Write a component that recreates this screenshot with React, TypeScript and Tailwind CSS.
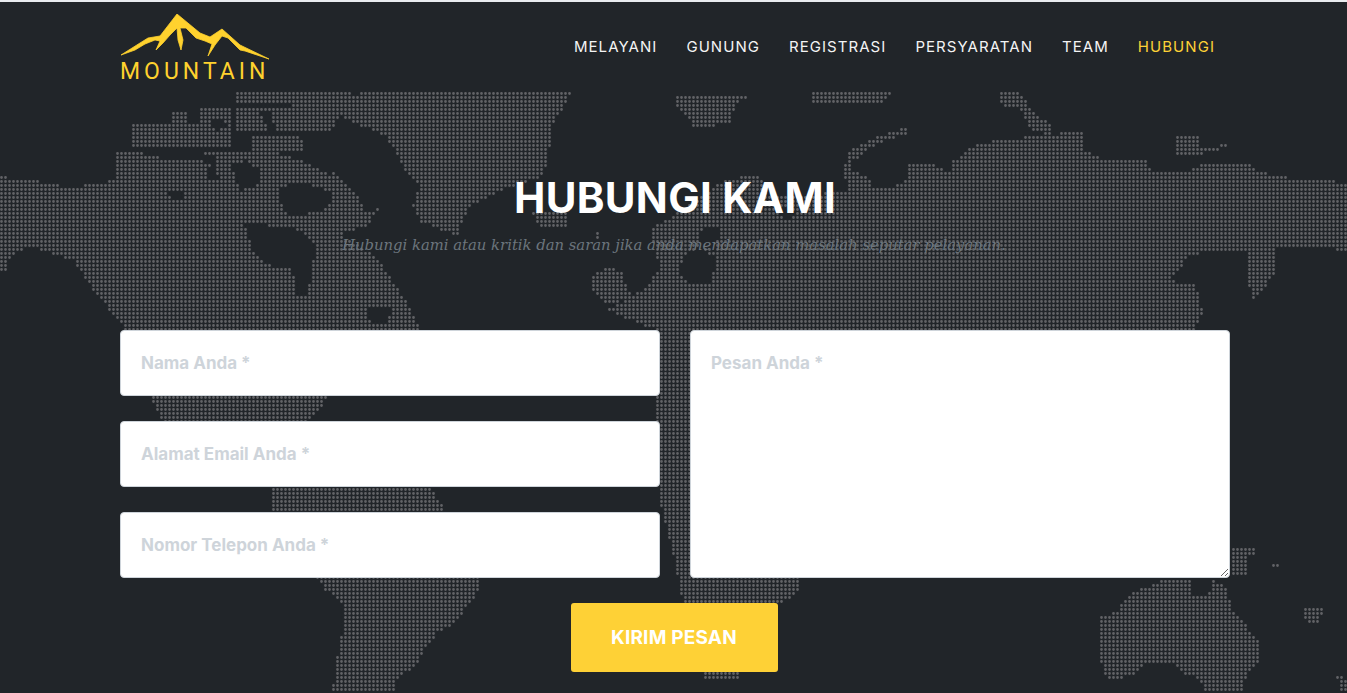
import { useMemo } from "react";

const navItems = ["MELAYANI", "GUNUNG", "REGISTRASI", "PERSYARATAN", "TEAM"];

const land = [
  // north america
  "0,177 35,180 60,186 72,190 85,185 117,180 117,150 200,150 270,150 300,160 333,170 353,190 367,213 380,207 367,225 340,235 377,257 397,287 407,303 417,320 420,332 410,370 330,396 305,425 165,425 150,396 120,320 107,307 93,290 73,260 30,247 10,255 8,270 0,272",
  // arctic islands
  "130,123 145,122 160,125 200,125 200,147 130,147",
  "170,112 187,112 187,127 170,127",
  "200,108 233,108 233,147 200,147",
  "237,107 317,107 317,133 237,133",
  "250,135 307,135 307,150 250,150",
  "237,92 353,92 345,110 330,133 300,133 290,105 237,102",
  // greenland
  "360,92 572,92 553,125 548,160 540,178 500,190 470,207 457,235 420,222 412,205 420,187 403,167 387,137 333,113",
  // iceland, svalbard, small islands
  "533,213 567,213 567,227 540,227",
  "675,97 690,95 747,97 735,105 730,122 695,130 687,115 675,108",
  "813,92 893,92 885,102 813,102",
  "1000,92 1020,92 1032,112 1053,125 1050,135 1030,130 1020,108 1000,105",
  "1177,137 1200,137 1200,147 1227,145 1227,147 1200,155 1177,155",
  "597,231 599,231 599,238 597,238",
  // uk
  "592,275 605,268 620,270 633,300 605,303 590,290",
  // europe and asia
  "607,310 647,287 660,267 650,230 677,213 720,183 747,175 762,178 768,195 843,193 870,193 870,186 895,186 905,182 907,165 925,162 950,172 952,162 975,145 1000,140 1050,135 1085,130 1083,150 1100,158 1135,158 1145,160 1150,170 1185,172 1200,165 1250,165 1260,172 1290,178 1330,180 1347,185 1347,250 1307,248 1277,246 1277,272 1262,290 1253,300 1247,280 1247,250 1220,250 1190,255 1170,280 1195,285 1203,312 1195,330 1000,340 800,420 800,578 678,578 662,505 656,420 656,330",
  // scandinavia
  "843,170 850,150 880,135 907,128 907,135 880,142 860,155 857,172 870,180 875,193 850,193",
  // south america
  "270,487 430,487 478,560 478,590 475,600 465,608 460,620 438,632 425,650 415,668 400,675 397,680 395,692 330,692 337,672 337,660 342,635 345,605 325,590 316,578 270,512",
  // africa under the button
  "660,500 678,575 682,600 704,678 738,678 770,610 800,592 800,575",
  // australia
  "1100,618 1118,610 1132,592 1145,588 1165,578 1190,578 1190,598 1212,592 1212,578 1228,590 1232,610 1242,618 1248,628 1260,640 1260,660 1247,675 1243,690 1205,690 1200,678 1185,675 1175,665 1145,665 1135,675 1112,680 1102,670 1100,650",
  // papua, pacific
  "1232,548 1255,548 1255,556 1248,556 1248,575 1232,575",
  "1272,562 1280,562 1280,566 1272,566",
  "1300,610 1325,606 1318,622 1308,622",
  "1337,675 1347,680 1347,690 1340,690",
];

const seas = [
  "245,225 265,225 300,230 315,245 312,275 305,297 295,295 293,270 270,265 255,255",
  "277,190 292,183 312,185 333,192 328,208 312,212 296,216 285,212",
  "133,147 170,148 215,155 215,162 170,160 135,152",
  "205,167 215,165 218,178 208,181",
  "232,165 246,160 262,172 256,186 240,191",
  "163,194 178,192 190,196 176,200",
  "207,123 220,120 230,125 218,130",
  "260,110 268,110 277,130 268,130",
  "237,133 295,133 295,137 237,137",
  "300,133 320,133 333,177 310,165",
  "366,309 393,307 385,323 370,322",
  "683,255 700,248 717,258 710,283 690,285 680,272",
  "700,230 720,228 715,250 700,247",
  "775,209 790,206 797,214 785,221",
  "850,160 860,157 857,172 850,172",
];

function parse(points: string) {
  return points.split(" ").map(p => p.split(",").map(Number));
}

function inside(x: number, y: number, poly: number[][]) {
  let hit = false;
  for (let i = 0, j = poly.length - 1; i < poly.length; j = i++) {
    const [xi, yi] = poly[i];
    const [xj, yj] = poly[j];
    if (yi > y !== yj > y && x < ((xj - xi) * (y - yi)) / (yj - yi) + xi) hit = !hit;
  }
  return hit;
}

function WorldMap() {
  // the map is a grid of dots, kept where a cell falls on land and not on a sea
  const d = useMemo(() => {
    const landPolys = land.map(parse);
    const seaPolys = seas.map(parse);
    let out = "";
    for (let y = 92; y < 693; y += 4) {
      for (let x = 0; x < 1347; x += 4) {
        const cx = x + 1.5;
        const cy = y + 1.5;
        if (landPolys.some(p => inside(cx, cy, p)) && !seaPolys.some(p => inside(cx, cy, p))) {
          out += `M${cx} ${cy}h.01`;
        }
      }
    }
    return out;
  }, []);

  return (
    <svg className="absolute top-0 left-0 w-[1347px] h-[693px]" viewBox="0 0 1347 693" aria-hidden="true">
      <path d={d} stroke="#626366" strokeWidth="2.8" strokeLinecap="round" fill="none" />
    </svg>
  );
}

function Logo() {
  return (
    <div className="flex flex-col w-[150px] h-[68px]">
      <svg className="w-[150px] h-[46px] shrink-0" viewBox="120 14 150 46">
        <path
          fill="#ffd22e"
          stroke="#ffd22e"
          strokeWidth="0.8"
          strokeLinejoin="round"
          d="M121 55 L140 43 L148 38 L160 36 L177 14 L200 33 L210 37 L222 29 L240 45 L269 59 L245 51 L240 50 L228 38 L222 36 L215 45 L208 56 L212 44 L205 41 L196 38 L186 28 L180 28 L183 40 L181 50 L178 40 L177 28 L170 35 L163 43 L156 50 L160 41 L155 40 L145 44 L135 50 Z"
        />
      </svg>
      <span className="mt-[1px] font-['Roboto',sans-serif] text-[23px] leading-[22px] tracking-[4px] text-[#ffd22e] whitespace-nowrap">
        MOUNTAIN
      </span>
    </div>
  );
}

const fieldClass =
  "h-[66px] w-full px-[20px] bg-white rounded-[4px] border border-[#ced4da] text-[17px] font-bold placeholder:text-[#ced4da]";

export default function App() {
  return (
    <div className="relative h-[693px] overflow-hidden bg-[#212529] font-['Inter',sans-serif]">
      <WorldMap />
      <div className="relative h-[2px] bg-[#e9ecef]" />
      <div className="relative w-[1110px] ml-[120px]">
        <nav className="flex items-center justify-between pt-[12px] pr-[15px] h-[80px]">
          <Logo />
          <ul className="flex gap-[29px] text-[15px] tracking-[1.05px] text-[#f4f4f4] -mt-[2px]">
            {navItems.map(item => (
              <li key={item}>{item}</li>
            ))}
            <li className="text-[#fed136]">HUBUNGI</li>
          </ul>
        </nav>
        <div className="text-center pt-[92px]">
          <h1 className="text-[42px] leading-[48px] tracking-[0.3px] font-bold text-white">HUBUNGI KAMI</h1>
          <p className="mt-[11px] pr-[2px] font-['DejaVu_Serif',serif] italic text-[14.8px] leading-[24px] text-[#6c757d]">
            Hubungi kami atau kritik dan saran jika anda mendapatkan masalah seputar pelayanan.
          </p>
        </div>
        <form className="mt-[73px]">
          <div className="grid grid-cols-2 gap-[30px]">
            <div className="flex flex-col gap-[25px]">
              <input className={fieldClass} placeholder="Nama Anda *" />
              <input className={fieldClass} placeholder="Alamat Email Anda *" />
              <input className={fieldClass} placeholder="Nomor Telepon Anda *" />
            </div>
            <textarea
              className="w-full h-[248px] p-[20px] bg-white rounded-[4px] border border-[#ced4da] text-[17px] font-bold placeholder:text-[#ced4da]"
              placeholder="Pesan Anda *"
            />
          </div>
          <div className="flex justify-center mt-[25px] pr-[2px]">
            <button type="button" className="w-[207px] h-[69px] pt-[2px] bg-[#fed136] rounded-[3px] text-white text-[19px] tracking-[0.2px] font-bold">
              KIRIM PESAN
            </button>
          </div>
        </form>
      </div>
    </div>
  );
}
